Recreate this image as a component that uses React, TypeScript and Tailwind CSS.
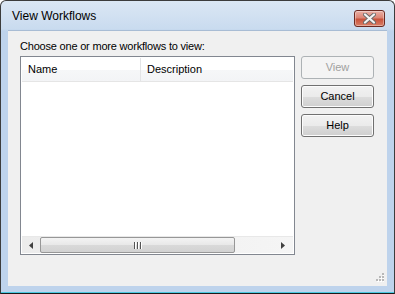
import React from "react";

const font = { fontFamily: '"Liberation Sans", Arial, sans-serif' };

function Btn({ label, disabled }: { label: string; disabled?: boolean }) {
  if (disabled) {
    return (
      <div className="w-[73px] h-[23px] rounded-[3px] border border-[#adb2b5] bg-[#f4f4f4] flex items-center justify-center text-[11px] text-[#a0a0a0]">
        {label}
      </div>
    );
  }
  return (
    <div className="w-[73px] h-[23px] rounded-[3px] border border-[#707070] bg-[linear-gradient(#f2f2f2_0%,#ebebeb_50%,#dddddd_51%,#cfcfcf_100%)] flex items-center justify-center text-[11px] text-black shadow-[inset_0_0_0_1px_#fcfcfc]">
      {label}
    </div>
  );
}

export default function App() {
  return (
    <div className="w-[395px] h-[294px] bg-white" style={font}>
      <div className="w-[395px] h-[294px] rounded-t-[6px] border border-[#3c3c3c] border-b-[#1a1a1a] bg-[linear-gradient(#dbe7f4_0px,#c9dbef_28px,#bed3ec_30px,#bed3ec_100%)] flex flex-col">
        <div className="h-[29px] flex items-start shrink-0">
          <div className="pl-[11px] pt-[8px] text-[12px] leading-[14px] text-black">View Workflows</div>
          <div className="ml-auto mr-[9px] mt-[9px] w-[31px] h-[17px] rounded-[3px] border border-[#6b2a22] bg-[linear-gradient(#eab0a6_0%,#dc8575_45%,#c9533c_55%,#d98068_100%)] flex items-center justify-center shadow-[inset_0_0_0_1px_rgba(255,255,255,0.35)]">
            <svg width="13" height="11" viewBox="0 0 13 11">
              <path d="M2 1.5 L11 9.5 M11 1.5 L2 9.5" stroke="#6a6a6a" strokeWidth="4" strokeLinecap="round" />
              <path d="M2 1.5 L11 9.5 M11 1.5 L2 9.5" stroke="#f4f4f4" strokeWidth="2.2" strokeLinecap="round" />
            </svg>
          </div>
        </div>
        <div className="mx-[7px] h-[256px] bg-[#f0f0f0] border-t border-[#a8bcd4] relative shrink-0">
          <div className="pl-[12px] pt-[9px] text-[11px] leading-[13px] tracking-[-0.2px] text-black">
            Choose one or more workflows to view:
          </div>
          <div className="flex mt-[3px] pl-[12px]">
            <div className="w-[275px] h-[199px] border border-[#828790] bg-white p-px flex flex-col">
              <div className="flex h-[24px] border-b border-[#e5e5e5] bg-[linear-gradient(#ffffff_0%,#ffffff_50%,#f6f7f8_51%,#f3f4f6_100%)] w-[271px]">
                <div className="w-[119px] border-r border-[#e3e4e6] pl-[6px] text-[11px] leading-[23px] text-black">Name</div>
                <div className="flex-1 pl-[6px] text-[11px] leading-[23px] text-black">Description</div>
              </div>
              <div className="flex-1" />
              <div className="h-[17px] flex bg-[linear-gradient(90deg,#ececec,#f5f5f5)] border-t border-[#e8e8e8]">
                <div className="w-[18px] flex items-center justify-center">
                  <svg width="4" height="7" viewBox="0 0 4 7"><path d="M4 0 L0 3.5 L4 7 Z" fill="#404040" /></svg>
                </div>
                <div className="w-[195px] h-[16px] rounded-[2px] border border-[#979797] bg-[linear-gradient(#f3f3f3_0%,#e8e8e8_50%,#d9d9d9_51%,#d2d2d2_100%)] flex items-center justify-center">
                  <svg width="8" height="7" viewBox="0 0 8 7">
                    <rect x="0" y="0" width="1" height="7" fill="#555" />
                    <rect x="3" y="0" width="1" height="7" fill="#555" />
                    <rect x="6" y="0" width="1" height="7" fill="#555" />
                    <rect x="1" y="0" width="1" height="7" fill="#fff" />
                    <rect x="4" y="0" width="1" height="7" fill="#fff" />
                    <rect x="7" y="0" width="1" height="7" fill="#fff" />
                  </svg>
                </div>
                <div className="flex-1 flex items-center justify-end pr-[8px]">
                  <svg width="4" height="7" viewBox="0 0 4 7"><path d="M0 0 L4 3.5 L0 7 Z" fill="#404040" /></svg>
                </div>
              </div>
            </div>
            <div className="ml-[6px] flex flex-col gap-[6px]">
              <Btn label="View" disabled />
              <Btn label="Cancel" />
              <Btn label="Help" />
            </div>
          </div>
          <div className="absolute right-[3px] bottom-[3px]">
            <svg width="10" height="10" viewBox="0 0 10 10">
              {[[8, 0], [5, 3], [8, 3], [2, 6], [5, 6], [8, 6]].map(([x, y], i) => (
                <g key={i}>
                  <rect x={x + 1} y={y + 1} width="2" height="2" fill="#ffffff" />
                  <rect x={x} y={y} width="2" height="2" fill="#b8b8b8" />
                </g>
              ))}
            </svg>
          </div>
        </div>
        <div className="flex-1 flex flex-col justify-end">
          <div className="h-px bg-[#4ac8e0]" />
        </div>
      </div>
    </div>
  );
}
